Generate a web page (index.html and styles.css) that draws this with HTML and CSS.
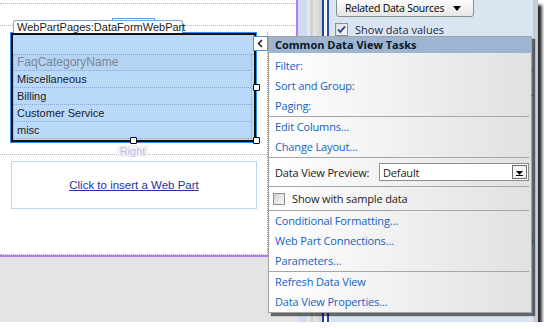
FILE: index.html
```html
<!DOCTYPE html>
<html lang="en">
<head>
  <meta charset="UTF-8" />
  <title>Common Data View Tasks</title>
  <link rel="stylesheet" href="styles.css">
</head>
<body>

<div class="shot">
  <div class="app">

    <!-- Design surface -->
    <div class="designer">
      <div class="canvas">
        <div class="rule"></div>
        <div class="zone-cap"></div>
        <div class="title-row">
          <span class="dots lead"></span>
          <span class="wp-tab">WebPartPages:DataFormWebPart</span>
          <span class="dots"></span>
        </div>
        <div class="zone">
          <div class="webpart">
            <div class="wp-head"></div>
            <div class="wp-list">
              <div class="wp-row th">FaqCategoryName</div>
              <div class="wp-row">Miscellaneous</div>
              <div class="wp-row">Billing</div>
              <div class="wp-row">Customer Service</div>
              <div class="wp-row">misc</div>
            </div>
            <span class="handle mid-right"></span>
            <span class="handle mid-bottom"></span>
            <span class="handle corner"></span>
          </div>
          <div class="label-row">
            <span class="dots lead2"></span>
            <span class="zone-label">Right</span>
            <span class="dots"></span>
          </div>
          <div class="insert"><a href="#">Click to insert a Web Part</a></div>
        </div>
      </div>
      <div class="below"></div>
    </div>

    <div class="splitter"></div>

    <!-- Data source details pane -->
    <div class="taskpane">
      <button class="related">
        <span>Related Data Sources</span>
        <svg width="8" height="5" viewBox="0 0 8 5"><path d="M0 0 H8 L4 5 Z" fill="#000"/></svg>
      </button>
      <div class="pane-check">
        <span class="cb">
          <svg width="11" height="11" viewBox="0 0 11 11"><path d="M2 5.5 L4.3 8 L9 2.5" fill="none" stroke="#1f3a93" stroke-width="1.8"/></svg>
        </span>
        Show data values
      </div>
      <div class="pane-rule one"></div>
      <div class="pane-rule two"></div>
      <div class="pane-tab">&rsaquo;</div>
    </div>
  </div>

  <!-- Smart tag menu -->
  <button class="collapse">
    <svg width="13" height="13" viewBox="0 0 13 13"><path d="M8 3 L4.5 6.5 L8 10" fill="none" stroke="#1a1a1a" stroke-width="1.5"/></svg>
  </button>

  <div class="tasks">
    <div class="tasks-head">Common Data View Tasks</div>
    <div class="group first">
      <a href="#">Filter:</a>
      <a href="#">Sort and Group:</a>
      <a href="#">Paging:</a>
    </div>
    <div class="sep"></div>
    <div class="group">
      <a href="#">Edit Columns…</a>
      <a href="#">Change Layout…</a>
    </div>
    <div class="sep"></div>
    <div class="preview-row">
      <span>Data View Preview:</span>
      <div class="select">
        <span>Default</span>
        <span class="drop">
          <svg width="13" height="13" viewBox="0 0 13 13"><path d="M3 5 H10 L6.5 9 Z" fill="#000"/><rect x="3" y="9" width="7" height="1" fill="#000"/></svg>
        </span>
      </div>
    </div>
    <div class="sep"></div>
    <div class="check-row">
      <span class="box"></span>
      Show with sample data
    </div>
    <div class="sep"></div>
    <div class="group">
      <a href="#">Conditional Formatting…</a>
      <a href="#">Web Part Connections…</a>
      <a href="#">Parameters…</a>
    </div>
    <div class="sep"></div>
    <div class="group">
      <a href="#">Refresh Data View</a>
      <a href="#">Data View Properties…</a>
    </div>
  </div>
</div>

</body>
</html>
```

FILE: styles.css
```css
body {
  margin: 0;
  padding: 0;
  background: white;
  overflow: hidden;
}

.shot {
  position: relative;
  width: 538px;
  height: 322px;
  box-shadow: 4px 5px 3px #2a2a2a;
}

.app {
  display: flex;
  height: 322px;
  overflow: hidden;
}

/* design surface */

.designer {
  width: 298px;
  display: flex;
  flex-direction: column;
}

.canvas {
  width: 296px;
  height: 255px;
  background: white;
  border-right: 2px solid #b57cf2;
  border-bottom: 2px solid #b57cf2;
  display: flex;
  flex-direction: column;
  font-family: "Liberation Sans", Arial, sans-serif;
}

.rule {
  margin-top: 3px;
  border-top: 1px dotted #b8b8b8;
}

.zone-cap {
  margin: 14px 0 0 112px;
  width: 41px;
  height: 1px;
  border: 1px solid #5c9ae0;
  border-bottom: none;
}

.title-row {
  display: flex;
  height: 12px;
}

.dots {
  flex: 1;
  height: 5px;
  border-bottom: 1px dotted #b5b5b5;
}

.dots.lead {
  flex: none;
  width: 13px;
}

.wp-tab {
  box-sizing: border-box;
  width: 170px;
  height: 13px;
  padding-left: 3px;
  border: 1px solid #7aa5d6;
  border-bottom: none;
  border-radius: 3px 3px 0 0;
  background: white;
  color: #1a1a1a;
  font-size: 11px;
  line-height: 12px;
  position: relative;
  z-index: 1;
}

.zone {
  flex: 1;
  width: 268px;
  box-sizing: border-box;
  border-right: 1px dotted #9a9a9a;
  border-bottom: 1px dotted #b0b0b0;
}

.webpart {
  position: relative;
  box-sizing: border-box;
  margin-left: 10px;
  width: 247px;
  height: 111px;
  padding: 2px;
  border: 1px solid #2e8ef2;
  box-shadow: inset 0 0 0 2px #111;
  background: #bad9fa;
}

.wp-head {
  height: 19px;
  border-bottom: 1px dotted #7f9cc4;
}

.wp-list {
  width: 239px;
  box-sizing: border-box;
  border-left: 1px dotted #8aa6cc;
  border-right: 1px dotted #8aa6cc;
}

.wp-row {
  height: 16px;
  line-height: 16px;
  padding-left: 3px;
  border-bottom: 1px dotted #8aa6cc;
  font-size: 11px;
  color: #1b1b1b;
}

.wp-row.th {
  height: 15px;
  line-height: 15px;
  font-size: 12px;
  color: #7a8696;
  background: #b5d3f2;
}

.handle {
  position: absolute;
  box-sizing: border-box;
  width: 7px;
  height: 7px;
  border: 1px solid #000;
  border-radius: 1px;
  background: white;
}

.handle.mid-right { left: 242px; top: 51px; }
.handle.mid-bottom { left: 119px; top: 104px; }
.handle.corner { left: 242px; top: 104px; }

.label-row {
  display: flex;
  height: 12px;
  margin-top: 2px;
}

.label-row .dots {
  height: 9px;
}

.dots.lead2 {
  flex: none;
  width: 117px;
}

.zone-label {
  width: 31px;
  background: #f2f2f2;
  color: #bcbcf0;
  font-size: 11px;
  line-height: 12px;
  text-align: center;
}

.insert {
  box-sizing: border-box;
  margin: 4px 0 0 11px;
  width: 246px;
  height: 48px;
  border: 1px solid #b9d7f4;
  display: flex;
  align-items: center;
  justify-content: center;
}

.insert a {
  font-size: 11.5px;
  color: #2333a6;
  text-decoration: underline;
}

.below {
  flex: 1;
  background: #e4e4e4;
}

/* splitter between surface and pane */

.splitter {
  width: 32px;
  background: linear-gradient(to right,
    #cddcf0 0, #cddcf0 9px,
    #ececec 9px, #dadada 13px, #bdbdbd 14px, #e6e6e6 15px, #cfcfcf 24px,
    #23429e 24px, #23429e 26px,
    #f6f8fb 26px, #f6f8fb 29px,
    #2a4aa8 29px, #2a4aa8 31px,
    #dae5f2 31px);
}

/* task pane */

.taskpane {
  width: 208px;
  box-sizing: border-box;
  background: #dae5f2;
  border-right: 5px solid #c3ccd7;
  font-family: "Open Sans", "Liberation Sans", sans-serif;
  font-size: 11px;
  display: flex;
  flex-direction: column;
}

.related {
  box-sizing: border-box;
  margin: -2px 0 0 6px;
  width: 138px;
  height: 19px;
  padding: 0 0 0 8px;
  display: flex;
  align-items: center;
  border: 1px solid #8c8c8c;
  border-radius: 3px;
  background: linear-gradient(#fdfdfd, #e6e6e6);
  font: inherit;
  font-size: 10.5px;
  letter-spacing: -0.25px;
  white-space: nowrap;
  color: #000;
}

.related svg {
  flex: none;
  margin: 1px 12px 0 auto;
}

.pane-check {
  display: flex;
  align-items: center;
  gap: 7px;
  margin: 6px 0 0 5px;
  height: 13px;
  color: #1c2a4a;
  white-space: nowrap;
}

.cb {
  box-sizing: border-box;
  width: 13px;
  height: 13px;
  border: 1px solid #8e8f8f;
  background: linear-gradient(135deg, #dcdcdc, #f8f8f8);
  display: flex;
  align-items: center;
  justify-content: center;
}

.pane-rule {
  border-top: 1px solid #3a64c0;
}

.pane-rule.one { margin-top: 34px; }
.pane-rule.two { margin-top: 24px; }

.pane-tab {
  align-self: flex-end;
  margin-top: 138px;
  width: 10px;
  height: 12px;
  background: #a9c4ea;
  color: #1f3a93;
  font-size: 10px;
  line-height: 12px;
  text-align: right;
}

/* smart tag */

.collapse {
  position: absolute;
  left: 253px;
  top: 36px;
  box-sizing: border-box;
  width: 15px;
  height: 15px;
  padding: 0;
  border: 1px solid #5a8cd0;
  background: white;
  display: flex;
  align-items: center;
  justify-content: center;
}

.tasks {
  position: absolute;
  left: 268px;
  top: 36px;
  box-sizing: border-box;
  width: 264px;
  height: 277px;
  border: 1px solid #a3a3a3;
  background: linear-gradient(to right, #ffffff, #e1e1e1);
  box-shadow: 3px 3px 1px rgba(0, 0, 0, 0.55);
  font-family: "Open Sans", "Liberation Sans", sans-serif;
  font-size: 11px;
  letter-spacing: -0.15px;
}

.tasks-head {
  height: 16px;
  line-height: 16px;
  padding-left: 6px;
  background: #9db5d1;
  color: #0a1626;
  font-weight: bold;
  letter-spacing: 0;
}

.group.first {
  padding-top: 3px;
}

.group a {
  display: block;
  height: 20px;
  line-height: 20px;
  padding-left: 6px;
  color: #1462c0;
  text-decoration: none;
}

.sep {
  height: 1px;
  margin-right: 2px;
  background: #a6a6a6;
}

.preview-row {
  display: flex;
  align-items: center;
  height: 28px;
  padding-left: 6px;
  color: #1a1a1a;
}

.select {
  box-sizing: border-box;
  display: flex;
  align-items: center;
  margin: 0 2px 0 auto;
  width: 150px;
  height: 18px;
  padding: 0 1px 0 3px;
  border: 1px solid #8e8e8e;
  background: white;
}

.drop {
  box-sizing: border-box;
  margin-left: auto;
  width: 15px;
  height: 14px;
  border: 1px solid #6f6f6f;
  background: #f4f4f4;
  display: flex;
  align-items: center;
  justify-content: center;
}

.check-row {
  display: flex;
  align-items: center;
  gap: 7px;
  height: 23px;
  padding-left: 4px;
  color: #1a1a1a;
}

.box {
  box-sizing: border-box;
  width: 12px;
  height: 12px;
  border: 1px solid #8e8f8f;
  background: linear-gradient(135deg, #d4d4d4, #f7f7f7);
}
```
